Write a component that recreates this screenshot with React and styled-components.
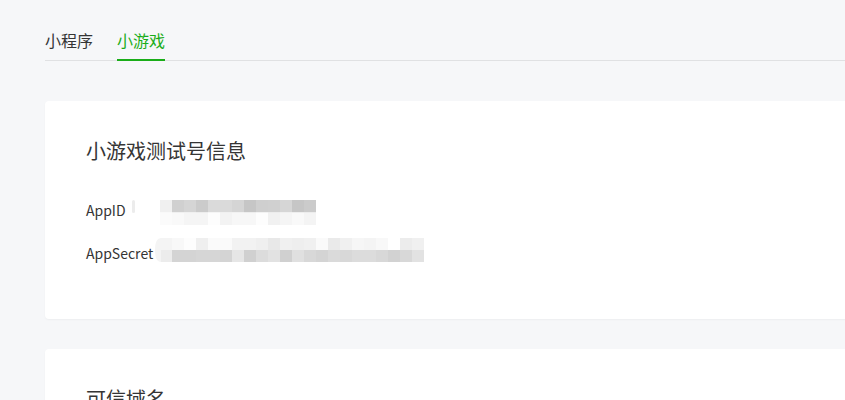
import React from "react";
import styled, { createGlobalStyle } from "styled-components";

const GlobalStyle = createGlobalStyle`
    html, body {
        margin: 0;
        padding: 0;
        background-color: #f6f7f9;
        overflow: hidden;
    }
    body {
        font-family: "Noto Sans CJK SC", "Noto Sans", sans-serif;
        color: #353535;
    }
`;

const StyledPage = styled.div`
    padding: 28px 0 0 45px;
    width: 900px;
`;

const StyledTabBar = styled.ul`
    display: flex;
    gap: 24px;
    list-style: none;
    margin: 0 0 40px 0;
    padding: 0;
    border-bottom: 1px solid #e0e1e3;
`;

const StyledTab = styled.li`
    font-size: 16px;
    line-height: 24px;
    padding-bottom: 7px;
    margin-bottom: -1px;
    color: ${(props) => (props.active ? "#1aad19" : "#353535")};
    border-bottom: 2px solid
        ${(props) => (props.active ? "#1aad19" : "transparent")};
    cursor: pointer;
`;

const StyledCard = styled.section`
    background-color: #ffffff;
    border-radius: 4px;
    box-shadow: 0 1px 2px 0 rgba(0, 0, 0, 0.04);
    padding: 36px 41px 54px;
    margin-bottom: 30px;
`;

const StyledCardTitle = styled.h3`
    margin: 0 0 33px 0;
    font-size: 20px;
    line-height: 28px;
    font-weight: normal;
    color: #353535;
`;

const StyledInfoList = styled.ul`
    list-style: none;
    margin: 0;
    padding: 0;
    display: flex;
    flex-direction: column;
    gap: 19px;
`;

const StyledInfoRow = styled.li`
    display: flex;
    align-items: flex-start;
    height: 24px;
`;

const StyledLabel = styled.span`
    font-size: 14px;
    line-height: 24px;
    color: #353535;
`;

const StyledMosaic = styled.svg`
    display: block;
    flex: none;
    margin-top: ${(props) => props.shift}px;
    margin-left: ${(props) => props.gap}px;
`;

const appIdTop = ["#f0f0f0", "#d0d0d0", "#d5d5d5", "#cbcbcb", "#dadada", "#dadada", "#d5d5d5", "#c6c6c6", "#cfcfcf", "#d0d0d0", "#d6d6d6", "#c6c6c6", "#cbcbcb"];
const appIdBottom = ["#fbfbfb", "#f9f9f9", "#f5f5f5", "#f5f5f5", "#fdfdfd", "#f3f3f3", "#f7f7f7", "#f7f7f7", "#fdfdfd", "#f1f1f1", "#f5f5f5", "#f9f9f9", "#f4f4f4"];

const secretTop = ["#f8f8f8", "#fdfdfd", "#efefef", "#fafafa", "#fafafa", "#f2f2f2", "#f2f2f2", "#efefef", "#e8e8e8", "#f0f0f0", "#eeeeee", "#f0f0f0", "#fafafa", "#eaeaea", "#f0f0f0", "#f6f6f6", "#f4f4f4", "#f8f8f8", "#ffffff", "#ececec", "#f0f0f0"];
const secretBottom = ["#d4d4d4", "#d4d4d4", "#d6d6d6", "#d6d6d6", "#d4d4d4", "#e6e6e6", "#d0d0d0", "#dcdcdc", "#e2e2e2", "#d0d0d0", "#e0e0e0", "#d8d8d8", "#d4d4d4", "#dadada", "#d8d8d8", "#dcdcdc", "#dcdcdc", "#d8d8d8", "#d2d2d2", "#d8d8d8", "#e2e2e2"];

// 打码后的敏感信息
const AppIdMosaic = () => (
    <StyledMosaic width="184" height="25" shift={2} gap={6}>
        <rect x="0" y="0" width="3" height="13" rx="1.5" fill="#ececec" />
        {appIdTop.map((c, i) => (
            <rect key={"t" + i} x={28 + i * 12} y="0" width="12" height="12.5" fill={c} />
        ))}
        {appIdBottom.map((c, i) => (
            <rect key={"b" + i} x={28 + i * 12} y="12.5" width="12" height="12.5" fill={c} />
        ))}
    </StyledMosaic>
);

const AppSecretMosaic = () => (
    <StyledMosaic width="269" height="24" shift={-3} gap={2}>
        <path d="M17 0 H6 Q0 0 0 12 Q0 24 6 24 H17 Z" fill="#f4f4f4" />
        <rect x="6" y="12" width="11" height="12" fill="#ececec" />
        {secretTop.map((c, i) => (
            <rect key={"t" + i} x={17 + i * 12} y="0" width="12" height="12" fill={c} />
        ))}
        {secretBottom.map((c, i) => (
            <rect key={"b" + i} x={17 + i * 12} y="12" width="12" height="12" fill={c} />
        ))}
    </StyledMosaic>
);

const App = () => {
    const tabs = [
        { id: 1, text: "小程序", active: false },
        { id: 2, text: "小游戏", active: true },
    ];

    return (
        <StyledPage>
            <GlobalStyle />
            <StyledTabBar>
                {tabs.map((tab) => (
                    <StyledTab key={tab.id} active={tab.active}>
                        {tab.text}
                    </StyledTab>
                ))}
            </StyledTabBar>

            <StyledCard>
                <StyledCardTitle>小游戏测试号信息</StyledCardTitle>
                <StyledInfoList>
                    <StyledInfoRow>
                        <StyledLabel>AppID</StyledLabel>
                        <AppIdMosaic />
                    </StyledInfoRow>
                    <StyledInfoRow>
                        <StyledLabel>AppSecret</StyledLabel>
                        <AppSecretMosaic />
                    </StyledInfoRow>
                </StyledInfoList>
            </StyledCard>

            <StyledCard>
                <StyledCardTitle>可信域名</StyledCardTitle>
            </StyledCard>
        </StyledPage>
    );
};

export default App;
